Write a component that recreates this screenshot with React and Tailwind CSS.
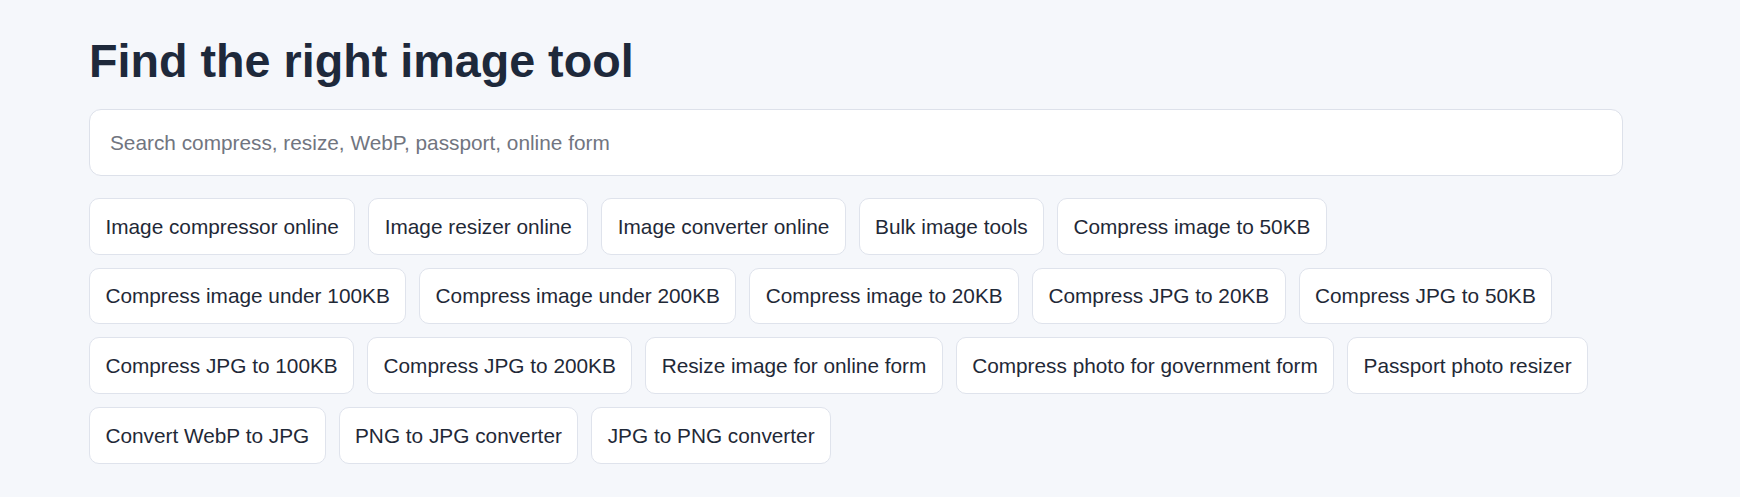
import React, { useState } from 'react';

const tools = [
  'Image compressor online',
  'Image resizer online',
  'Image converter online',
  'Bulk image tools',
  'Compress image to 50KB',
  'Compress image under 100KB',
  'Compress image under 200KB',
  'Compress image to 20KB',
  'Compress JPG to 20KB',
  'Compress JPG to 50KB',
  'Compress JPG to 100KB',
  'Compress JPG to 200KB',
  'Resize image for online form',
  'Compress photo for government form',
  'Passport photo resizer',
  'Convert WebP to JPG',
  'PNG to JPG converter',
  'JPG to PNG converter',
];

const App = () => {
  const [query, setQuery] = useState('');

  const visible = tools.filter((t) => t.toLowerCase().includes(query.trim().toLowerCase()));

  return (
    <div className="min-h-[497px] bg-[#f5f7fb] font-['Liberation_Sans',Arial,sans-serif]">
      <div className="pl-[89px] pt-[33px] w-[1623px]">
        <h1 className="text-[46.7px] leading-[56px] font-bold text-[#1e293b]">Find the right image tool</h1>

        <input
          type="text"
          value={query}
          onChange={(e) => setQuery(e.target.value)}
          placeholder="Search compress, resize, WebP, passport, online form"
          className="mt-[20px] block w-full h-[67px] px-[20px] rounded-[12px] border border-[#dde1ea] bg-white text-[20.8px] text-[#1f2937] placeholder:text-[#717580] focus:outline-none"
        />

        <div className="mt-[22px] flex flex-wrap gap-[13px]">
          {visible.map((tool) => (
            <a
              key={tool}
              href="#"
              className="inline-flex items-center h-[56.7px] px-[15.4px] rounded-[10px] border border-[#dfe3ec] bg-white text-[20.8px] text-[#1f2937] whitespace-nowrap"
            >
              {tool}
            </a>
          ))}
        </div>
      </div>
    </div>
  );
};

export default App;
